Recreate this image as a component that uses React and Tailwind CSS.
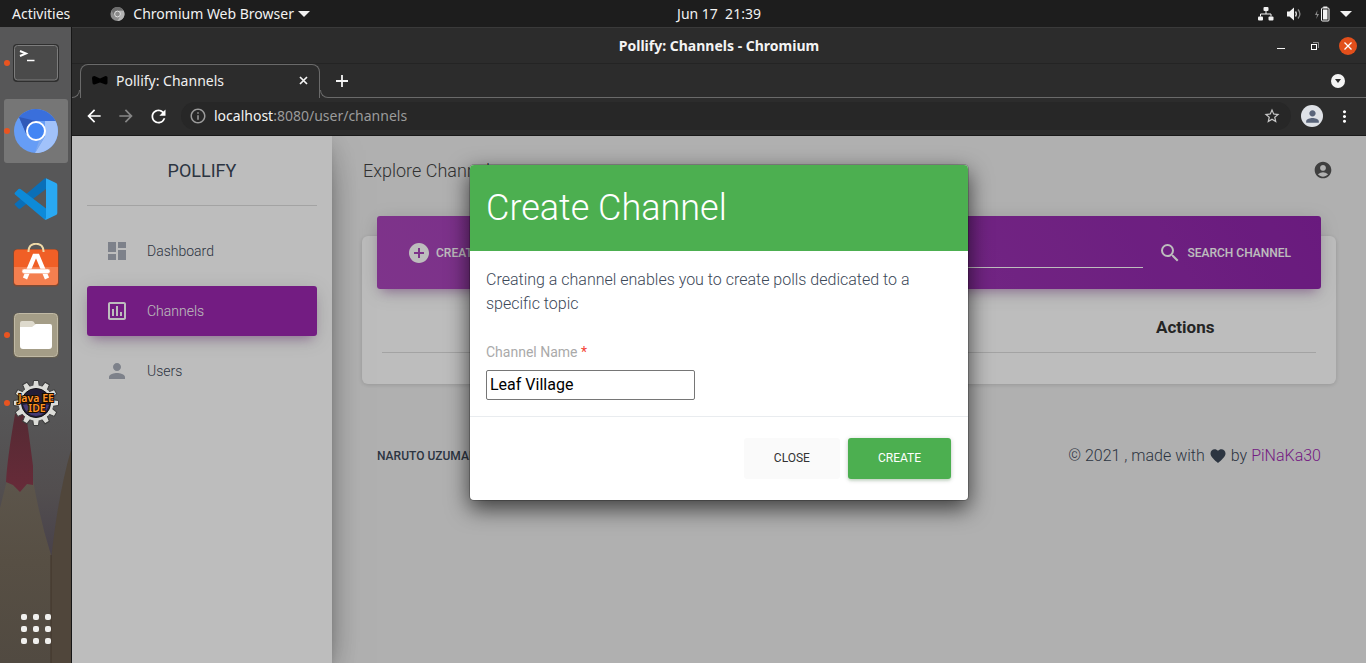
import React from "react";
import {
  MdAccountCircle,
  MdAddCircle,
  MdArrowBack,
  MdArrowForward,
  MdDashboard,
  MdFavorite,
  MdInfoOutline,
  MdMoreVert,
  MdOutlineAssessment,
  MdPerson,
  MdRefresh,
  MdSearch,
  MdStarBorder,
} from "react-icons/md";

function TopBar() {
  return (
    <header className="grid h-[27px] shrink-0 grid-cols-[1fr_auto_1fr] items-center bg-[#1d1d1d] font-['Noto_Sans',sans-serif] text-[14px] leading-5 text-[#f2f2f2]">
      <div className="flex items-center pl-3">
        <button type="button">Activities</button>
        <button type="button" className="ml-10 flex items-center gap-2">
          <svg width="15" height="16" viewBox="0 0 16 16" aria-hidden="true">
            <circle cx="8" cy="8" r="7.5" fill="#8d8d8d" />
            <path d="M1.5 4.3A7.5 7.5 0 0 1 14.5 4.3L8 4.5L5 10Z" fill="#6d6d6d" />
            <path d="M14.6 4.5A7.5 7.5 0 0 1 8 15.5L11.3 9.5L10 4.5Z" fill="#b5b5b5" />
            <circle cx="8" cy="8" r="3.1" fill="#8a8a8a" stroke="#e8e8e8" strokeWidth="1" />
          </svg>
          <span>Chromium Web Browser</span>
          <svg className="-ml-1" width="12" height="6" viewBox="0 0 12 6" aria-hidden="true">
            <path d="M0 0H12L6 6Z" fill="#f2f2f2" />
          </svg>
        </button>
      </div>
      <time className="whitespace-pre pl-[72px] text-[14px]">Jun 17  21:39</time>
      <div className="flex items-center justify-end pr-[14px]">
        <svg width="16" height="14" viewBox="0 0 16 14" fill="#f2f2f2" aria-label="Network">
          <rect x="5.5" y="0" width="5" height="4" rx="1" />
          <rect x="0" y="9.5" width="5" height="4" rx="1" />
          <rect x="10.5" y="9.5" width="5" height="4" rx="1" />
          <path d="M8 4V7M2.5 9.5V7H13V9.5" fill="none" stroke="#f2f2f2" />
        </svg>
        <svg className="ml-3" width="16" height="14" viewBox="0 0 16 14" aria-label="Volume">
          <path d="M1 4.5H3.5L8 .5V13.5L3.5 9.5H1Z" fill="#f2f2f2" />
          <path d="M9.5 4.5Q11.3 7 9.5 9.5" fill="none" stroke="#d8d8d8" strokeWidth="1.3" />
          <path d="M12 2.5Q15.8 7 12 11.5" fill="none" stroke="#8a8a8a" strokeWidth="1.3" />
        </svg>
        <svg className="ml-3" width="16" height="16" viewBox="0 0 16 16" aria-label="Battery">
          <path d="M3.5 4L1 9H3L2.2 13L5 8H3Z" fill="#8a8a8a" />
          <rect x="7.5" y="2" width="7.5" height="13" rx="1" fill="none" stroke="#f2f2f2" />
          <rect x="9.3" y="0.5" width="4" height="1.5" fill="#f2f2f2" />
          <rect x="9" y="3.5" width="4.5" height="10" fill="#f2f2f2" />
        </svg>
        <svg className="ml-[10px]" width="12" height="6" viewBox="0 0 12 6" aria-hidden="true">
          <path d="M0 0H12L6 6Z" fill="#f2f2f2" />
        </svg>
      </div>
    </header>
  );
}

function TerminalIcon() {
  return (
    <svg width="48" height="48" viewBox="0 0 48 48">
      <rect x="1" y="5" width="46" height="38" rx="4" fill="#2f2f2f" />
      <rect x="2.5" y="6.5" width="43" height="34.5" rx="3" fill="#4a4a4a" stroke="#7d7d7d" strokeWidth="1" />
      <path d="M8 12L14 14.5L8 17" fill="none" stroke="#fff" strokeWidth="1.9" />
      <path d="M15 21.5H22.5" stroke="#fff" strokeWidth="1.5" />
    </svg>
  );
}

function ChromiumIcon() {
  return (
    <svg width="48" height="48" viewBox="0 0 48 48">
      <circle cx="24" cy="24" r="22" fill="#669df6" />
      <path d="M7 10A22 22 0 0 1 43.5 14H24L14.5 27.5Z" fill="#3a6fdb" />
      <path d="M43.5 14A22 22 0 0 1 23 46L33 29.5V14Z" fill="#a1c2fa" />
      <path d="M7 10L14.5 27.5L24 14Z" fill="#3059b8" />
      <path d="M33 29L23 46L27 34Z" fill="#7fa9ee" />
      <circle cx="24" cy="24" r="9" fill="#4285f4" stroke="#fff" strokeWidth="2" />
    </svg>
  );
}

function CodeIcon() {
  return (
    <svg width="48" height="48" viewBox="0 0 48 48">
      <path d="M3 30L6.5 33.5Q7.5 34 8.5 33.5L34 14V3.5Q33 3 32 4L3 28.5Q2 29.3 3 30Z" fill="#0a6fb8" />
      <path d="M3 17.5L6.5 14Q7.5 13.5 8.5 14L34 33.5V44.5Q33 45 32 44L3 19.5Q2 18.5 3 17.5Z" fill="#0d8ad8" />
      <path d="M34 3.2L44 8Q45.3 8.7 45.3 10V38Q45.3 39.3 44 40L34 44.8Q32.5 44.8 34 43Z" fill="#29a9f3" />
    </svg>
  );
}

function SoftwareIcon() {
  return (
    <svg width="48" height="48" viewBox="0 0 48 48">
      <rect x="1" y="6" width="46" height="37.5" rx="4" fill="#7c4a35" />
      <rect x="2" y="6.5" width="44" height="35.5" rx="3.5" fill="#f05f26" />
      <path d="M2 24H46V38Q46 42 42 42H6Q2 42 2 38Z" fill="#f47f4f" />
      <path d="M16.500 9V8Q17 .8 24 .8T31.500 8V9" fill="none" stroke="#efd9a7" strokeWidth="2" />
      <path d="M13 35.500L22.500 13H25.500L35 35.500" fill="none" stroke="#fff" strokeWidth="4.500" />
      <rect x="10" y="26" width="28" height="4.500" rx="2.200" fill="#fff" stroke="#f7a27f" strokeWidth="0.600" />
    </svg>
  );
}

function FilesIcon() {
  return (
    <svg width="48" height="48" viewBox="0 0 48 48">
      <rect x="1" y="2" width="46" height="45" rx="4.500" fill="#645f52" />
      <rect x="2.500" y="2.500" width="43" height="43" rx="4" fill="#a49d87" stroke="#c0b9a5" />
      <path d="M8 24V12Q8 10 10 10H20Q22 10 23 13H37V24Z" fill="#dedacd" />
      <path d="M8 16H20L24 13H38Q40 13 40 15V35Q40 38 37 38H11Q8 38 8 35Z" fill="#fff" />
    </svg>
  );
}

const teeth = [0, 30, 60, 90, 120, 150, 180, 210, 240, 270, 300, 330];

function JavaIcon() {
  return (
    <svg width="48" height="48" viewBox="0 0 48 48">
      <g fill="#dcdcd8" stroke="#3a3a3a" strokeWidth="1">
        {teeth.map((angle) => (
          <path key={angle} d="M20.500 9L21.500 1.500H26.500L27.500 9Z" transform={`rotate(${angle} 24 24)`} />
        ))}
      </g>
      <circle cx="24" cy="24" r="17.500" fill="#dcdcd8" />
      <circle cx="24" cy="24" r="14.500" fill="#221d38" stroke="#111" />
      <path d="M11 26Q24 22 37 26Q33 37 24 37T11 26Z" fill="#463b75" />
      <g
        fontFamily="Noto Sans, sans-serif"
        fontWeight="600"
        fontSize="10.500"
        textAnchor="middle"
        fill="#ff9326"
        stroke="#1a0d00"
        strokeWidth="2"
        paintOrder="stroke"
      >
        <text x="24" y="22.500">Java EE</text>
        <text x="25" y="32.500">IDE</text>
      </g>
    </svg>
  );
}

const dockItems = [
  { name: "Terminal", Icon: TerminalIcon, running: true },
  { name: "Chromium Web Browser", Icon: ChromiumIcon, running: true, active: true },
  { name: "Visual Studio Code", Icon: CodeIcon },
  { name: "Ubuntu Software", Icon: SoftwareIcon },
  { name: "Files", Icon: FilesIcon, running: true },
  { name: "Eclipse", Icon: JavaIcon, running: true },
];

function Wallpaper() {
  return (
    <svg
      className="absolute bottom-0 left-0"
      width="71"
      height="263"
      viewBox="0 0 71 263"
      aria-hidden="true"
    >
      <defs>
        <linearGradient id="haze" x1="0" y1="0" x2="0" y2="1">
          <stop offset="0" stopColor="#575758" />
          <stop offset="0.35" stopColor="#524e4f" />
          <stop offset="0.6" stopColor="#48414a" />
          <stop offset="1" stopColor="#4c4540" />
        </linearGradient>
        <linearGradient id="wood" x1="0" y1="0" x2="0" y2="1">
          <stop offset="0" stopColor="#5c554b" />
          <stop offset="0.45" stopColor="#574f44" />
          <stop offset="1" stopColor="#514a41" />
        </linearGradient>
        <linearGradient id="lead" x1="0" y1="0" x2="0" y2="1">
          <stop offset="0" stopColor="#552a33" />
          <stop offset="1" stopColor="#672b39" />
        </linearGradient>
      </defs>
      <rect width="71" height="263" fill="url(#haze)" />
      <path d="M71 50Q58 95 51 160V263H71Z" fill="#50463b" />
      <path d="M0 108L7 80L33 80Q40 120 51 155V263H0Z" fill="url(#wood)" />
      <path d="M15 14H26Q31 50 33 66V85L27 84L20 92L13 85L6 82Q7 60 15 14Z" fill="url(#lead)" />
      <path d="M51 155V263" stroke="#40342b" />
    </svg>
  );
}

function Dock() {
  return (
    <nav
      aria-label="Dock"
      className="relative flex w-[72px] shrink-0 flex-col justify-between border-r border-[#161616] bg-[#575758]"
    >
      <Wallpaper />
      <ul className="relative flex flex-col gap-1 px-1 pt-1">
        {dockItems.map(({ name, Icon, running, active }) => (
          <li key={name} className="relative">
            <button
              type="button"
              aria-label={name}
              className={`flex h-16 w-16 items-center justify-center rounded-[3px] ${active ? "bg-[#767676]" : ""}`}
            >
              <Icon />
            </button>
            {running && <span className="absolute top-[29px] left-0 h-[6px] w-[6px] rounded-full bg-[#e95420]" />}
          </li>
        ))}
      </ul>
      <button type="button" aria-label="Show applications" className="relative flex justify-center pr-px pb-[19px] pl-[2px]">
        <span className="grid grid-cols-3 gap-[6px]">
          {teeth.slice(0, 9).map((n) => (
            <span key={n} className="h-[6px] w-[6px] rounded-[2px] bg-[#f0f0ee]" />
          ))}
        </span>
      </button>
    </nav>
  );
}

function TitleBar() {
  return (
    <div className="grid h-9 shrink-0 grid-cols-[1fr_auto_1fr] items-center border-t border-[#3a3a3a] bg-[#2c2c2c]">
      <span />
      <p className="font-['Noto_Sans',sans-serif] text-[14px] font-bold text-[#f4f4f4]">Pollify: Channels - Chromium</p>
      <div className="flex items-center justify-end pr-[9px]">
        <button type="button" aria-label="Minimize" className="flex h-5 w-5 items-center justify-center">
          <svg width="8" height="8" viewBox="0 0 8 8"><path d="M0 6.500H8" stroke="#f4f4f4" /></svg>
        </button>
        <button type="button" aria-label="Restore" className="ml-[14px] flex h-5 w-5 items-center justify-center">
          <svg width="8" height="8" viewBox="0 0 8 8" fill="none">
            <path d="M2 .5H7.500V6" stroke="#8c8c8c" />
            <rect x=".5" y="2.500" width="5" height="5" stroke="#fff" />
          </svg>
        </button>
        <button type="button" aria-label="Close window" className="ml-[14px] flex h-[18px] w-[18px] items-center justify-center rounded-full bg-[#e24f1b]">
          <svg width="8" height="8" viewBox="0 0 8 8"><path d="M.5 .5L7.500 7.500M7.500 .5L.5 7.500" stroke="#fff" strokeWidth="1.300" /></svg>
        </button>
      </div>
    </div>
  );
}

function TabStrip() {
  return (
    <div className="flex h-[35px] shrink-0 items-end border-t border-[#242424] bg-[#2c2c2c] font-['Noto_Sans',sans-serif]">
      <span className="h-2 w-2 self-end rounded-br-[8px] border-r border-b border-[#6a6a6a]" />
      <div className="flex h-full w-[240px] items-center rounded-t-[8px] border-t border-r border-l border-[#6a6a6a] pr-[11px] pb-[2px] pl-[11px]">
        <svg width="16" height="9" viewBox="0 0 16 9" aria-hidden="true">
          <path d="M0 2Q0 0 2.500 0L8 2.500L13.500 0Q16 0 15.500 2.500V7Q15.500 8.500 13.500 8.500L8 6.500L2.500 8.500Q.5 8.500 .5 7Z" fill="#000" />
        </svg>
        <span className="ml-2 flex-1 text-[14px] text-[#f0f0f0]">Pollify: Channels</span>
        <button type="button" aria-label="Close tab">
          <svg width="9" height="9" viewBox="0 0 9 9"><path d="M1 1L8 8M8 1L1 8" stroke="#f4f4f4" strokeWidth="1.700" /></svg>
        </button>
      </div>
      <span className="h-2 w-2 self-end rounded-bl-[8px] border-b border-l border-[#6a6a6a]" />
      <div className="flex h-full flex-1 items-center justify-between border-b border-[#6a6a6a] pr-[21px] pl-2">
        <button type="button" aria-label="New tab">
          <svg width="12" height="12" viewBox="0 0 12 12"><path d="M6 0V12M0 6H12" stroke="#f4f4f4" strokeWidth="1.800" /></svg>
        </button>
        <button type="button" aria-label="Search tabs" className="flex h-[14px] w-[14px] items-center justify-center rounded-full bg-[#f4f4f4]">
          <svg width="6" height="4" viewBox="0 0 6 4"><path d="M0 0H6L3 4Z" fill="#2c2c2c" /></svg>
        </button>
      </div>
    </div>
  );
}

function Toolbar() {
  return (
    <div className="flex h-[38px] shrink-0 items-center border-b border-[#1a1a1a] bg-[#2c2c2c] px-3 pb-px text-white">
      <button type="button" aria-label="Back"><MdArrowBack size={20} /></button>
      <button type="button" aria-label="Forward" className="ml-3 text-[#868686]"><MdArrowForward size={20} /></button>
      <button type="button" aria-label="Reload" className="ml-3"><MdRefresh size={21} /></button>
      <div className="ml-3 flex h-7 flex-1 items-center rounded-full bg-[#272727] pr-[10px] pl-2">
        <MdInfoOutline size={18} className="text-[#9a9a9a]" />
        <p className="ml-[7px] flex-1 pb-px font-['Noto_Sans',sans-serif] text-[14px] text-[#9b9b9b]">
          <span className="text-[#f4f4f4]">localhost</span>:8080/user/channels
        </p>
        <button type="button" aria-label="Bookmark"><MdStarBorder size={18} className="text-[#c8c8c8]" /></button>
      </div>
      <button type="button" aria-label="Profile" className="ml-[10px] flex h-[22px] w-[22px] items-center justify-center rounded-full bg-[#dee1e6] text-[#59647a]">
        <MdPerson size={19} />
      </button>
      <button type="button" aria-label="Browser menu" className="ml-3"><MdMoreVert size={19} /></button>
    </div>
  );
}

const links = [
  { label: "Dashboard", Icon: MdDashboard },
  { label: "Channels", Icon: MdOutlineAssessment, active: true },
  { label: "Users", Icon: MdPerson },
];

function Sidebar() {
  return (
    <aside className="z-10 w-[260px] shrink-0 bg-white px-[15px] shadow-[0_16px_38px_-12px_rgba(0,0,0,0.56),0_4px_25px_0_rgba(0,0,0,0.12),0_8px_10px_-5px_rgba(0,0,0,0.2)]">
      <p className="border-b border-[#dcdcdc] pt-5 pb-[19px] text-center text-[18px] leading-[30px] text-[#3c4858]">POLLIFY</p>
      <ul className="flex flex-col gap-[10px] pt-5">
        {links.map(({ label, Icon, active }) => (
          <li key={label}>
            <a
              href={`#${label.toLowerCase()}`}
              className={`flex h-[50px] items-center gap-[18px] rounded-[3px] px-[18px] text-[14px] font-light ${
                active
                  ? "bg-[#9c27b0] text-white shadow-[0_4px_20px_0_rgba(0,0,0,0.14),0_7px_10px_-5px_rgba(156,39,176,0.4)]"
                  : "text-[#3c4858]"
              }`}
            >
              <Icon size={24} className={active ? "text-white" : "text-[#a9afbb]"} />
              {label}
            </a>
          </li>
        ))}
      </ul>
    </aside>
  );
}

function ChannelsPage() {
  return (
    <main className="min-w-0 flex-1 px-[30px]">
      <div className="flex h-[68px] items-center justify-between pr-[3px] pl-px">
        <h1 className="text-[18px] font-light text-[#444]">Explore Channels</h1>
        <a href="#account" aria-label="Account" className="text-[#555]"><MdAccountCircle size={20} /></a>
      </div>
      <section className="mt-8 flex flex-col rounded-[6px] bg-white px-[15px] pb-[31px] shadow-[0_1px_4px_0_rgba(0,0,0,0.14)]">
        <div className="-mt-5 flex h-[73px] items-center justify-between rounded-[3px] bg-[linear-gradient(60deg,#ab47bc,#8e24aa)] px-[30px] text-[12px] font-medium text-white shadow-[0_4px_20px_0_rgba(0,0,0,0.14),0_7px_10px_-5px_rgba(156,39,176,0.4)]">
          <button type="button" className="flex items-center gap-[5px]">
            <MdAddCircle size={24} />
            CREATE CHANNEL
          </button>
          <form className="flex items-center">
            <input aria-label="Search channel" className="h-[30px] w-[240px] border-b border-white bg-transparent" />
            <button type="button" className="ml-[15px] flex items-center gap-[5px]">
              <MdSearch size={24} />
              SEARCH CHANNEL
            </button>
          </form>
        </div>
        <div className="px-[5px] pt-[15px]">
          <table className="w-full table-fixed text-[17px] text-[#333]">
            <thead>
              <tr className="border-b border-[#dcdcdc]">
                <th className="w-[72%]" aria-label="Channel" />
                <th className="h-12 font-bold">Actions</th>
              </tr>
            </thead>
          </table>
        </div>
      </section>
      <footer className="flex items-center justify-between px-[15px] pt-[60px] text-[#3c4858]">
        <p className="text-[12px] font-medium">NARUTO UZUMAKI</p>
        <p className="flex items-center gap-1 text-[16px] font-light">
          © 2021 , made with <MdFavorite size={18} /> by
          <a href="#author" className="text-[#9c27b0]">PiNaKa30</a>
        </p>
      </footer>
    </main>
  );
}

function CreateChannelDialog() {
  return (
    <div className="absolute inset-0 z-20 flex items-start justify-center bg-black/26 pt-7">
      <form
        role="dialog"
        aria-labelledby="dialog-title"
        className="w-[500px] overflow-hidden rounded-[5px] border border-black/20 bg-white bg-clip-padding shadow-[0_8px_22px_0_rgba(0,0,0,0.65)]"
      >
        <h2 id="dialog-title" className="bg-[#4caf50] p-4 text-[36px] leading-[54px] font-light text-white">Create Channel</h2>
        <div className="border-b border-[#e9ecef] px-4 pt-[17px] pb-4">
          <p className="text-[16px] leading-6 font-light text-[#3c4858]">
            Creating a channel enables you to create polls dedicated to a specific topic
          </p>
          <label htmlFor="channel-name" className="mt-[25px] block text-[14px] leading-[22px] text-[#aaa]">
            Channel Name <span className="text-[#f44336]">*</span>
          </label>
          <input
            id="channel-name"
            defaultValue="Leaf Village"
            className="mt-[7px] block h-[30px] w-[209px] rounded-[2px] border border-[#767676] px-[3px] pb-[2px] text-[16px] text-black"
          />
        </div>
        <div className="flex justify-end gap-2 px-[17px] pt-[21px] pb-[21px] text-[12px] leading-[17px]">
          <button type="button" className="rounded-[3px] bg-[#fafafa] px-[30px] py-3 text-[#333]">CLOSE</button>
          <button type="button" className="rounded-[3px] bg-[#4caf50] px-[30px] py-3 text-white shadow-[0_2px_2px_0_rgba(76,175,80,0.14),0_1px_5px_0_rgba(0,0,0,0.2)]">CREATE</button>
        </div>
      </form>
    </div>
  );
}

export default function App() {
  return (
    <div className="flex min-h-screen flex-col">
      <TopBar />
      <div className="flex flex-1">
        <Dock />
        <div className="flex min-w-0 flex-1 flex-col">
          <TitleBar />
          <TabStrip />
          <Toolbar />
          <div className="relative flex flex-1 overflow-hidden bg-[#eee] font-[Roboto,sans-serif]">
            <Sidebar />
            <ChannelsPage />
            <CreateChannelDialog />
          </div>
        </div>
      </div>
    </div>
  );
}
